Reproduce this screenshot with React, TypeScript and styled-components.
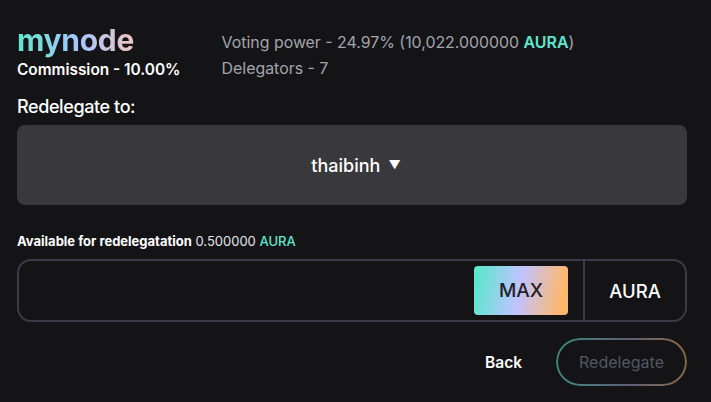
import React, { useState } from "react";
import styled, { createGlobalStyle } from "styled-components";

const GlobalStyle = createGlobalStyle`
  html, body {
    margin: 0;
    padding: 0;
    background-color: #141417;
    font-family: Inter, "Noto Sans", sans-serif;
  }
`;

const Page = styled.div`
  width: 711px;
  height: 402px;
  box-sizing: border-box;
  padding: 22px 24px 0 17px;
  background-color: #141417;
  color: #fff;
`;

const Header = styled.div`
  display: flex;
  align-items: flex-start;
  gap: 41px;
`;

const NodeInfo = styled.div`
  display: flex;
  flex-direction: column;
`;

const NodeName = styled.h1`
  margin: 0;
  font-size: 30px;
  font-weight: 700;
  line-height: 36px;
  letter-spacing: -0.3px;
  background: linear-gradient(90deg, #5ee6cf 0%, #a9c4ff 55%, #eec6bd 100%);
  -webkit-background-clip: text;
  background-clip: text;
  color: transparent;
  width: fit-content;
`;

const Commission = styled.div`
  font-size: 15.4px;
  font-weight: 600;
  line-height: 20px;
  margin-top: 2px;
`;

const Stats = styled.div`
  display: flex;
  flex-direction: column;
  gap: 6px;
  padding-top: 11px;
`;

const StatLine = styled.div`
  font-size: 15.9px;
  line-height: 20px;
  color: #a3a4ac;
`;

const Token = styled.span<{ $bold?: boolean }>`
  color: #5ee6cf;
  font-weight: ${(p) => (p.$bold ? 600 : 500)};
`;

const SectionLabel = styled.div`
  margin-top: 15px;
  font-size: 18px;
  font-weight: 500;
  letter-spacing: -0.4px;
  line-height: 24px;
`;

const Select = styled.button`
  margin-top: 6px;
  width: 100%;
  height: 80px;
  border: none;
  border-radius: 8px;
  background-color: #38383d;
  color: #fff;
  font-family: inherit;
  font-size: 18px;
  font-weight: 500;
  display: flex;
  align-items: center;
  justify-content: center;
  gap: 8px;
  padding-left: 14px;
  cursor: pointer;
`;

const Caret = styled.span`
  font-size: 12px;
  line-height: 1;
`;

const Available = styled.div`
  margin-top: 28px;
  font-size: 13px;
  line-height: 16px;
  color: #e4e4e8;
  b {
    color: #fff;
    font-weight: 700;
  }
`;

const AmountBox = styled.div`
  margin-top: 10px;
  height: 63px;
  box-sizing: border-box;
  border: 2px solid #3a3b48;
  border-radius: 14px;
  display: flex;
  align-items: stretch;
`;

const AmountInput = styled.input`
  flex: 1;
  min-width: 0;
  background: transparent;
  border: none;
  outline: none;
  color: #fff;
  font-family: inherit;
  font-size: 18px;
  padding: 0 16px;
`;

const MaxButton = styled.button`
  align-self: center;
  width: 94px;
  height: 49px;
  margin-right: 15px;
  border: none;
  border-radius: 4px;
  background: linear-gradient(100deg, #5ee6cf 5%, #c0c3ff 48%, #ffb86b 92%);
  color: #222226;
  font-family: inherit;
  font-size: 19px;
  font-weight: 500;
  cursor: pointer;
`;

const Unit = styled.div`
  width: 100px;
  border-left: 2px solid #3a3b48;
  display: flex;
  align-items: center;
  justify-content: center;
  font-size: 18.5px;
  font-weight: 500;
`;

const Actions = styled.div`
  margin-top: 16px;
  display: flex;
  justify-content: flex-end;
  align-items: center;
  gap: 34px;
`;

const TextButton = styled.button`
  background: none;
  border: none;
  color: #fff;
  font-family: inherit;
  font-size: 15.5px;
  font-weight: 600;
  cursor: pointer;
  padding: 0;
`;

const OutlineButton = styled.button<{ $disabled?: boolean }>`
  position: relative;
  width: 131px;
  height: 48px;
  border: none;
  border-radius: 24px;
  background: transparent;
  color: ${(p) => (p.$disabled ? "#525862" : "#fff")};
  font-family: inherit;
  font-size: 16px;
  cursor: ${(p) => (p.$disabled ? "default" : "pointer")};
  &::before {
    content: "";
    position: absolute;
    inset: 0;
    border-radius: 24px;
    padding: 2px;
    background: linear-gradient(90deg, #3b8a7e, #5d5f78 55%, #8c6a43);
    -webkit-mask: linear-gradient(#000 0 0) content-box, linear-gradient(#000 0 0);
    -webkit-mask-composite: xor;
    mask-composite: exclude;
  }
`;

export default function App() {
  const [amount, setAmount] = useState("");

  return (
    <>
      <GlobalStyle />
      <Page>
        <Header>
          <NodeInfo>
            <NodeName>mynode</NodeName>
            <Commission>Commission - 10.00%</Commission>
          </NodeInfo>
          <Stats>
            <StatLine>
              Voting power - 24.97% (10,022.000000 <Token $bold>AURA</Token>)
            </StatLine>
            <StatLine>Delegators - 7</StatLine>
          </Stats>
        </Header>

        <SectionLabel>Redelegate to:</SectionLabel>
        <Select>
          thaibinh <Caret>▼</Caret>
        </Select>

        <Available>
          <b>Available for redelegatation</b> 0.500000 <Token>AURA</Token>
        </Available>

        <AmountBox>
          <AmountInput value={amount} onChange={(e) => setAmount(e.target.value)} />
          <MaxButton onClick={() => setAmount("0.500000")}>MAX</MaxButton>
          <Unit>AURA</Unit>
        </AmountBox>

        <Actions>
          <TextButton>Back</TextButton>
          <OutlineButton $disabled={!amount}>Redelegate</OutlineButton>
        </Actions>
      </Page>
    </>
  );
}
